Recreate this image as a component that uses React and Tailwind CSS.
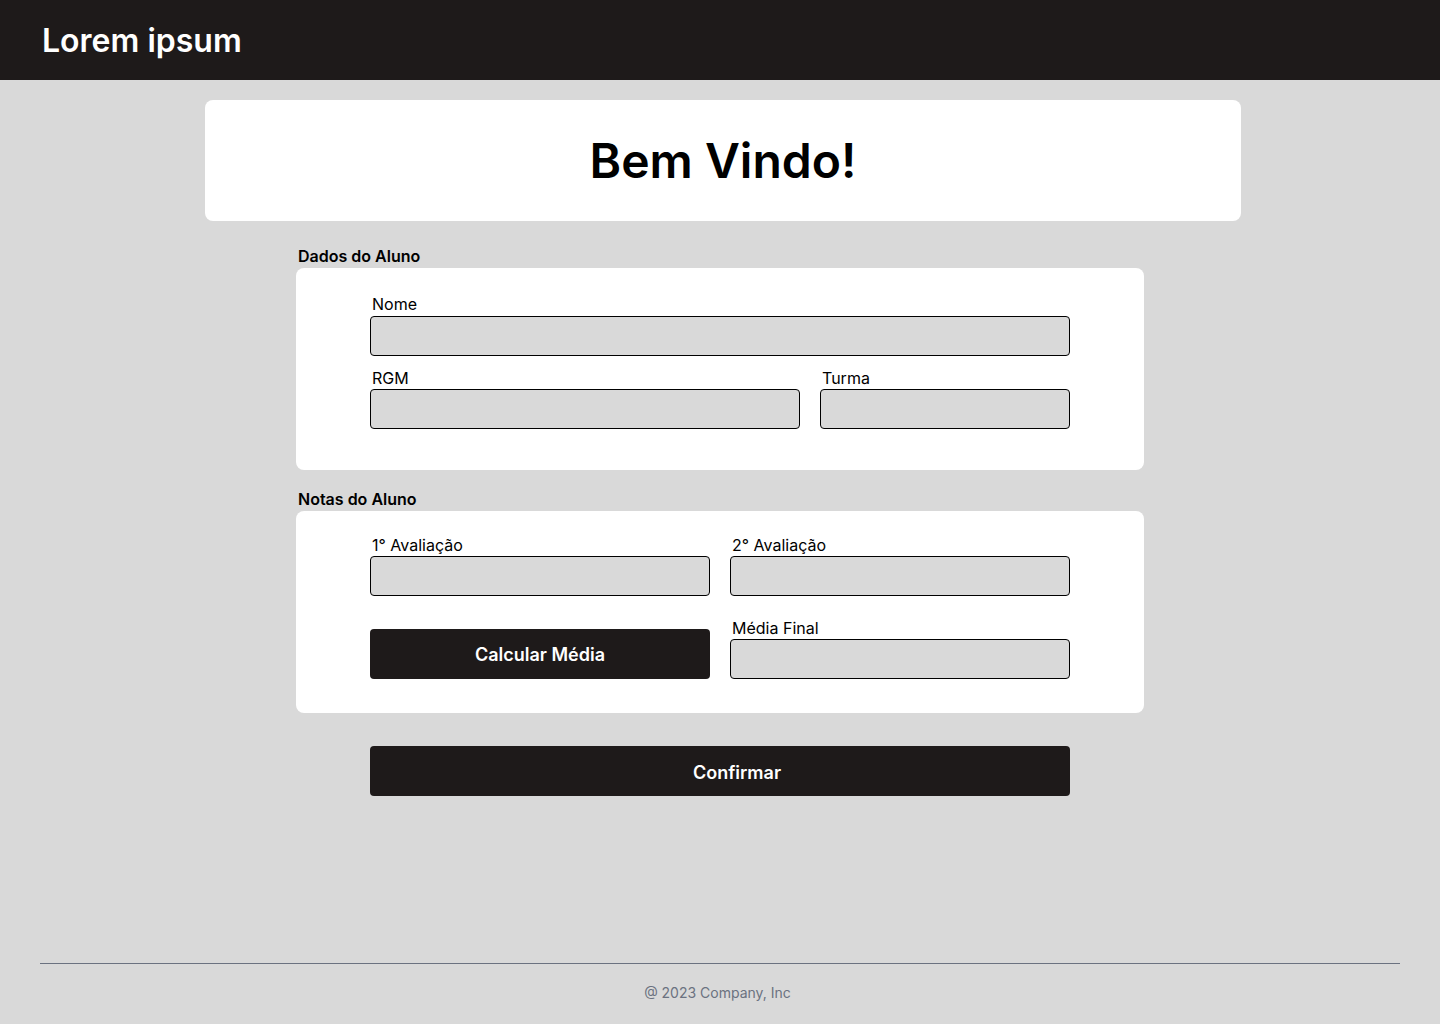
const Field = ({ label, className = '', gap = 'mb-[1px]' }) => (
  <div className={`flex flex-col ${className}`}>
    <label className={`pl-[2px] text-[16px] leading-[20px] text-black ${gap}`}>{label}</label>
    <input
      type="text"
      className="h-[40px] w-full rounded-[4px] border border-black bg-[#d9d9d9] px-3 outline-none"
    />
  </div>
);

export default function App() {
  return (
    <div className="flex min-h-screen flex-col bg-[#d9d9d9] font-['Inter',sans-serif]">
      {/* Header */}
      <header className="flex h-[80px] items-center bg-[#1e1a1a] px-[42px]">
        <h1 className="mt-[2px] text-[32px] font-semibold text-white">Lorem ipsum</h1>
      </header>

      <main className="flex flex-col items-center">
        {/* Welcome */}
        <div className="mt-[20px] ml-[6px] flex h-[121px] w-[1036px] items-center justify-center rounded-[8px] bg-white">
          <h2 className="text-[48px] font-semibold text-black">Bem Vindo!</h2>
        </div>

        {/* Dados do Aluno */}
        <div className="mt-[25px] w-[848px]">
          <h3 className="mb-[2px] pl-[2px] text-[16px] font-semibold leading-[20px] text-black">Dados do Aluno</h3>
          <div className="rounded-[8px] bg-white px-[74px] pt-[26px] pb-[41px]">
            <Field label="Nome" gap="mb-[2px]" />
            <div className="mt-[12px] flex gap-[20px]">
              <Field label="RGM" className="w-[430px]" />
              <Field label="Turma" className="w-[250px]" />
            </div>
          </div>
        </div>

        {/* Notas do Aluno */}
        <div className="mt-[19px] w-[848px]">
          <h3 className="mb-[2px] pl-[2px] text-[16px] font-semibold leading-[20px] text-black">Notas do Aluno</h3>
          <div className="rounded-[8px] bg-white px-[74px] pt-[24px] pb-[34px]">
            <div className="grid grid-cols-2 gap-x-[20px]">
              <Field label="1° Avaliação" />
              <Field label="2° Avaliação" />
            </div>
            <div className="mt-[22px] grid grid-cols-2 items-end gap-x-[20px]">
              <button className="h-[50px] rounded-[4px] bg-[#1e1a1a] text-[18px] font-semibold text-white">
                Calcular Média
              </button>
              <Field label="Média Final" />
            </div>
          </div>
        </div>

        {/* Confirmar */}
        <button className="mt-[33px] h-[50px] w-[700px] rounded-[4px] bg-[#1e1a1a] pt-[2px] pl-[34px] text-[18px] font-semibold text-white">
          Confirmar
        </button>
      </main>

      {/* Footer */}
      <footer className="mx-[40px] mt-auto border-t border-[#6b7280] pt-[19px] pb-[21px] pr-[5px] text-center">
        <p className="text-[14px] leading-[20px] text-[#6b7280]">@ 2023 Company, Inc</p>
      </footer>
    </div>
  );
}
